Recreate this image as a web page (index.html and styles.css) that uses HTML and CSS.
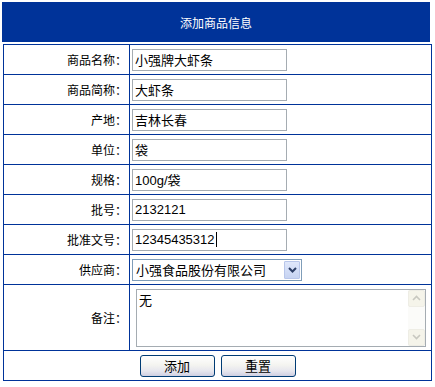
FILE: index.html
```html
<!DOCTYPE html>
<html>
<head>
<meta charset="utf-8">
<link rel="stylesheet" href="styles.css">
</head>
<body>
<div class="page">
  <div class="title">添加商品信息</div>
  <table class="form">
    <tr><th>商品名称：</th><td><input class="field" value="小强牌大虾条"></td></tr>
    <tr><th>商品简称：</th><td><input class="field" value="大虾条"></td></tr>
    <tr><th>产地：</th><td><input class="field" value="吉林长春"></td></tr>
    <tr><th>单位：</th><td><input class="field" value="袋"></td></tr>
    <tr><th>规格：</th><td><input class="field" value="100g/袋"></td></tr>
    <tr><th>批号：</th><td><input class="field" value="2132121"></td></tr>
    <tr><th>批准文号：</th><td><div class="field fake">12345435312<span class="caret"></span></div></td></tr>
    <tr><th>供应商：</th><td>
      <div class="select">
        <span class="sel-text">小强食品股份有限公司</span>
        <span class="sel-btn"><svg width="9" height="6" viewBox="0 0 9 6"><path d="M1 1 L4.5 4.5 L8 1" fill="none" stroke="#2c3e66" stroke-width="2"/></svg></span>
      </div>
    </td></tr>
    <tr class="memo"><th>备注：</th><td>
      <div class="textarea">
        <div class="ta-text">无</div>
        <div class="scroll">
          <div class="sb-btn"><svg width="9" height="6" viewBox="0 0 9 6"><path d="M1 5 L4.5 1.5 L8 5" fill="none" stroke="#c8c8c0" stroke-width="1.6"/></svg></div>
          <div class="sb-track"></div>
          <div class="sb-btn"><svg width="9" height="6" viewBox="0 0 9 6"><path d="M1 1 L4.5 4.5 L8 1" fill="none" stroke="#c8c8c0" stroke-width="1.6"/></svg></div>
        </div>
      </div>
    </td></tr>
    <tr><td colspan="2" class="actions"><button class="btn">添加</button><button class="btn">重置</button></td></tr>
  </table>
</div>
</body>
</html>
```
FILE: styles.css
```css
html, body { margin: 0; padding: 0; background: #fff; }
body { font-family: "Noto Sans CJK SC", "Liberation Sans", sans-serif; font-size: 12px; color: #000; }
.page { padding: 2px 0 0 2px; }
.title {
  width: 428px; height: 40px; background: #003399; color: #fff;
  display: flex; align-items: center; justify-content: center;
  font-size: 12px;
}
.form {
  margin: 2px 0 0 1px; width: 429px;
  border-collapse: collapse; border: 1px solid #003399;
}
.form th, .form td { border: 1px solid #003399; padding: 0; height: 29px; }
.form th {
  width: 123px; text-align: right; font-weight: normal; padding-right: 2px;
  font-size: 12px;
}
.form td { padding-left: 2px; text-align: left; }
.field {
  box-sizing: border-box; width: 155px; height: 22px; margin: 0;
  border: 1px solid #a5acb2; padding: 0 2px; vertical-align: middle;
  font-family: "Liberation Sans", "Noto Sans CJK SC", sans-serif; font-size: 13px; color: #000;
  background: #fff; outline: none;
}
.fake { display: flex; align-items: center; line-height: 1; }
.caret { display: inline-block; width: 1px; height: 15px; background: #000; margin-left: 1px; }
.select {
  box-sizing: border-box; width: 170px; height: 22px;
  border: 1px solid #7f9db9; display: flex; align-items: stretch;
  font-size: 13px; background: #fff;
}
.sel-text { flex: 1; display: flex; align-items: center; padding-left: 3px; }
.sel-btn {
  width: 16px; margin: 1px; box-sizing: border-box;
  border: 1px solid #b8c6ea; border-radius: 1px;
  background: linear-gradient(#dfe7fb, #c6d3f2);
  display: flex; align-items: center; justify-content: center;
}
.memo th, .memo td { height: 65px; }
.textarea {
  box-sizing: border-box; width: 290px; height: 58px; margin-left: 4px;
  border: 1px solid #a5acb2; display: flex; background: #fff;
}
.ta-text { flex: 1; font-size: 13px; padding: 2px 2px; line-height: 16px; }
.scroll { width: 17px; display: flex; flex-direction: column; background: #fbfbf9; }
.sb-btn {
  height: 17px; box-sizing: border-box; border: 1px solid #eeede5; border-radius: 2px;
  background: #f5f4ea; display: flex; align-items: center; justify-content: center;
}
.sb-track { flex: 1; }
.form .actions { text-align: center; padding-left: 0; }
.btn {
  width: 75px; height: 22px; margin: 0 3px; padding: 0;
  border: 1px solid #003c74; border-radius: 3px;
  background: linear-gradient(#ffffff 0%, #f4f4f0 45%, #e6e6ee 75%, #cfcfe2 100%);
  font-family: "Noto Sans CJK SC", sans-serif; font-size: 13px; color: #000;
  vertical-align: middle;
}
```
